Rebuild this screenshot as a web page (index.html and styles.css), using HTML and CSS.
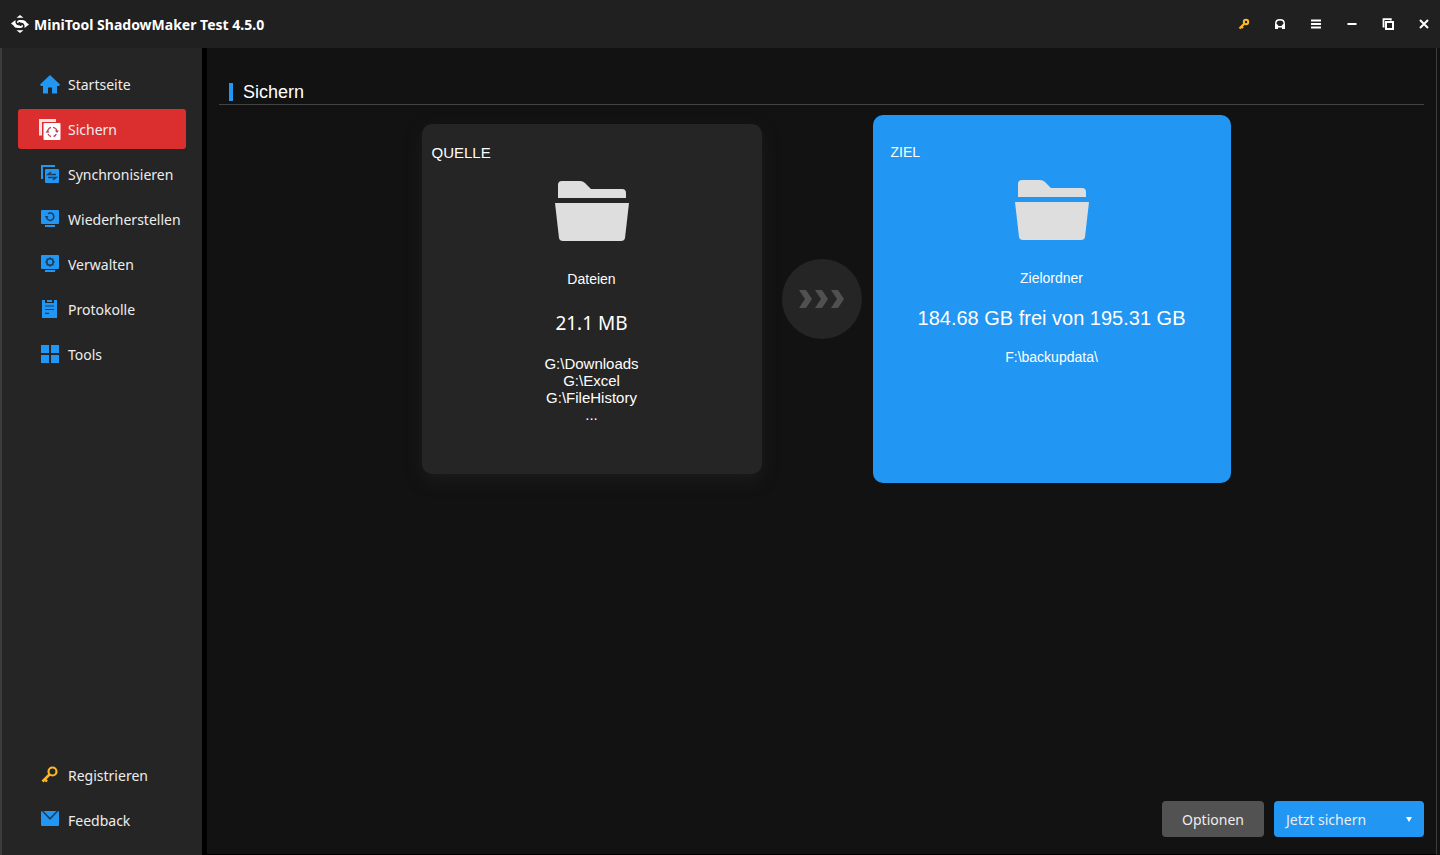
FILE: index.html
```html
<!DOCTYPE html>
<html lang="de">
<head>
<meta charset="utf-8">
<meta name="viewport" content="width=device-width, initial-scale=1">
<title>MiniTool ShadowMaker Test 4.5.0</title>
<link rel="stylesheet" href="styles.css">
</head>
<body>
<svg class="defs" aria-hidden="true">
  <symbol id="folder" viewBox="0 0 74 60">
    <path d="M3 17V4Q3 0 7 0H25Q28 0 30 2L36 8H67Q71 8 71 12V17Z"/>
    <path d="M0 22H74L70 57Q69.500 60 66 60H8Q4.500 60 4 57Z"/>
  </symbol>
</svg>
<div class="app">
  <header class="titlebar">
    <svg class="logo" viewBox="0 0 20 20" aria-hidden="true">
      <path fill="#fff" d="M6.500 3.800L10 1L13.500 3.800ZM6.500 16.200L10 19L13.500 16.200Z"/>
      <path fill="#fff" d="M1 9.500L5.500 6V8.500Q6 11.500 10 11.500V14H8Q4.500 14 3.500 11.500ZM19 10.500L14.500 14V11.500Q14 8.500 10 8.500V6H12Q15.500 6 16.500 8.500Z"/>
      <path fill="none" stroke="#fff" stroke-width="1.800" d="M11.500 7H9Q7.500 7.500 8.200 8.800M8.500 13H11Q12.500 12.500 11.800 11.200"/>
    </svg>
    <h1 class="app-name">MiniTool ShadowMaker Test 4.5.0</h1>
    <div class="window-actions">
      <button class="action" aria-label="Registrieren"><svg viewBox="0 0 12 12"><g fill="none" stroke="#fdb827"><circle cx="8" cy="4" r="2.200" stroke-width="2"/><path stroke-width="2.200" d="M6.500 5.500L1.500 10.500M3.500 8.500L5 10"/></g></svg></button>
      <button class="action" aria-label="Support"><svg viewBox="0 0 12 12"><path fill="none" stroke="#fff" stroke-width="1.500" d="M1.800 8V5.500Q1.800 1.800 6 1.800T10.200 5.500V8"/><path fill="#fff" d="M1 6.500L3 6L4.500 8L7.500 8L9 6L11 6.500V11H8V9.500H4V11H1Z"/></svg></button>
      <button class="action" aria-label="Menü"><svg viewBox="0 0 12 12"><path stroke="#fff" stroke-width="2" d="M1 2.500H11M1 6H11M1 9.500H11"/></svg></button>
      <button class="action" aria-label="Minimieren"><svg viewBox="0 0 12 12"><path stroke="#fff" stroke-width="2" d="M1.500 6H10.500"/></svg></button>
      <button class="action" aria-label="Wiederherstellen"><svg viewBox="0 0 12 12"><path fill="none" stroke="#fff" stroke-width="1.800" d="M2.500 8.500H1.500V1.200H8.800V2.500"/><rect x="4" y="4" width="7" height="7" fill="none" stroke="#fff" stroke-width="2"/></svg></button>
      <button class="action" aria-label="Schließen"><svg viewBox="0 0 12 12"><path stroke="#fff" stroke-width="2" d="M2 2L10 10M10 2L2 10"/></svg></button>
    </div>
  </header>
  <nav class="sidebar">
    <a class="nav-item" href="#start"><svg viewBox="0 0 20 20"><path fill="#2196f3" d="M10 0L20 9.500L19 11H17V18.500H12V12.500H8V18.500H3V11H1L0 9.500Z"/></svg>Startseite</a>
    <a class="nav-item is-active" href="#sichern" aria-current="page"><svg viewBox="0 0 20 20"><path fill="#f6dfe8" d="M-1 -1H16V2H2V15.500H-1Z"/><rect x="3.500" y="3" width="17" height="17" rx="1" fill="#fff"/><g fill="none" stroke="#c4405a" stroke-width="1.300"><path d="M7.500 12.500Q7.500 8.500 11 7.300M13 7.300Q17 8 17 12M16.200 14Q15.500 16 13.500 16.500M11 16.500Q9 16 8 14"/></g><path fill="#c4405a" d="M14.800 10.500H19L17 13ZM5.500 12.500H9.700L7.500 10Z"/></svg>Sichern</a>
    <a class="nav-item" href="#sync"><svg viewBox="0 0 20 20"><path fill="#2196f3" d="M1 0H15V2H3V14H1Z"/><rect x="5" y="4" width="14" height="14" rx="1" fill="#2196f3"/><path fill="none" stroke="#203c56" stroke-width="1.500" d="M16 9.500H8L11 7M8 12.500H16L13 15"/></svg>Synchronisieren</a>
    <a class="nav-item" href="#restore"><svg viewBox="0 0 20 20"><rect x="1" width="18" height="14" rx="1" fill="#2196f3"/><path fill="#2196f3" d="M5 15H15V17H5Z"/><path fill="none" stroke="#203c56" stroke-width="1.500" d="M6.500 7A3.700 3.700 0 1 0 8 3.700"/><path fill="#203c56" d="M4.800 6H8.500L6.500 8.500Z"/></svg>Wiederherstellen</a>
    <a class="nav-item" href="#manage"><svg viewBox="0 0 20 20"><rect x="1" width="18" height="14" rx="1" fill="#2196f3"/><path fill="#2196f3" d="M5 15H15V17H5Z"/><circle cx="10" cy="7" r="3.200" fill="none" stroke="#203c56" stroke-width="1.500"/><path stroke="#203c56" stroke-width="1.500" d="M10 2.300V4M10 10V11.700M5.300 7H7M13 7H14.700M6.700 3.700L8 5M12 9L13.300 10.300M13.300 3.700L12 5M8 9L6.700 10.300"/></svg>Verwalten</a>
    <a class="nav-item" href="#logs"><svg viewBox="0 0 20 20"><path fill="#2196f3" d="M2 0H5V3H14V0H17V18H2ZM7 0H12V2H7Z"/><path stroke="#203c56" stroke-width="1.200" d="M5 6H14M5 9.500H14M5 13.300H9"/></svg>Protokolle</a>
    <a class="nav-item" href="#tools"><svg viewBox="0 0 20 20"><path fill="#2196f3" d="M1 0H9V8H1ZM11 0H19V8H11ZM1 10H9V18H1ZM11 10H19V18H11Z"/></svg>Tools</a>
    <div class="nav-spacer"></div>
    <a class="nav-item" href="#register"><svg viewBox="0 0 20 20"><g fill="none" stroke="#fdb827"><circle cx="12.500" cy="5.500" r="4" stroke-width="2.200"/><path stroke-width="2.500" d="M9.500 8.500L2.500 15.500M4.500 13L7 15.500"/></g></svg>Registrieren</a>
    <a class="nav-item" href="#feedback"><svg viewBox="0 0 20 20"><rect x="1" y="0" width="18" height="15" rx="1" fill="#2196f3"/><path fill="none" stroke="#203c56" stroke-width="1.600" d="M2.500 0L10 7.800L17.500 0"/></svg>Feedback</a>
  </nav>
  <main class="content">
    <h2 class="page-title">Sichern</h2>
    <section class="flow">
      <button class="card card-source">
        <span class="card-label">QUELLE</span>
        <svg class="folder"><use href="#folder"/></svg>
        <span class="kind">Dateien</span>
        <span class="size">21.1 MB</span>
        <span class="paths">G:\Downloads<br>G:\Excel<br>G:\FileHistory<br>...</span>
      </button>
      <div class="arrow"><svg viewBox="0 0 46 18" aria-hidden="true"><path d="M0 0H7L13 9L7 18H0L6 9ZM16 0H23L29 9L23 18H16L22 9ZM32 0H39L45 9L39 18H32L38 9Z"/></svg></div>
      <button class="card card-target">
        <span class="card-label">ZIEL</span>
        <svg class="folder"><use href="#folder"/></svg>
        <span class="kind">Zielordner</span>
        <span class="size">184.68 GB frei von 195.31 GB</span>
        <span class="paths">F:\backupdata\</span>
      </button>
    </section>
    <footer class="actions">
      <button class="btn btn-options">Optionen</button>
      <button class="btn btn-primary">Jetzt sichern<svg viewBox="0 0 6 5" aria-hidden="true"><path d="M0 0H6L3 5Z"/></svg></button>
    </footer>
  </main>
</div>
</body>
</html>
```

FILE: styles.css
```css
* {
  box-sizing: border-box;
}

body {
  margin: 0;
  background: #121212;
  color: #fff;
  font-family: "Noto Sans", sans-serif;
  font-size: 14px;
}

button {
  border: 0;
  padding: 0;
  color: inherit;
  font: inherit;
  background: none;
  cursor: pointer;
}

.defs {
  position: absolute;
  width: 0;
  height: 0;
}

.app {
  display: grid;
  grid-template: 48px 1fr / 207px 1fr;
  min-height: 100vh;
}

.titlebar {
  grid-column: 1 / -1;
  display: flex;
  align-items: center;
  padding: 0 4px 0 10px;
  background: #202020;
}

.logo {
  width: 20px;
  height: 20px;
  margin-right: 4px;
}

.app-name {
  margin: 0;
  padding-top: 2px;
  font-size: 14px;
  font-weight: 700;
  line-height: 20px;
}

.window-actions {
  display: flex;
  gap: 12px;
  margin-left: auto;
}

.action {
  display: grid;
  place-items: center;
  width: 24px;
  height: 24px;
}

.action svg {
  width: 12px;
  height: 12px;
}

.sidebar {
  display: flex;
  flex-direction: column;
  gap: 5px;
  padding: 16px 16px 15px;
  border-left: 2px solid #3c3c3c;
  border-right: 5px solid #000;
  background: #252525;
}

.nav-item {
  display: flex;
  align-items: center;
  gap: 8px;
  height: 40px;
  padding-top: 1px;
  padding-left: 22px;
  border-radius: 3px;
  color: #ededed;
  line-height: 20px;
  text-decoration: none;
  white-space: nowrap;
}

.nav-item svg {
  flex: none;
  width: 20px;
  height: 20px;
  overflow: visible;
}

.nav-item.is-active {
  background: #db2e2e;
}

.nav-spacer {
  flex: 1;
  margin-bottom: -5px;
}

.content {
  display: flex;
  flex-direction: column;
  margin-right: 3px;
  padding: 32px 12px 17px;
  border-right: 1px solid #3c3c3c;
  border-bottom: 1px solid #000;
  font-family: "Liberation Sans", Arial, sans-serif;
}

.page-title {
  display: flex;
  align-items: center;
  gap: 10px;
  height: 25px;
  margin: 0 0 19px;
  padding-left: 10px;
  border-bottom: 1px solid #434343;
  font-size: 18px;
  font-weight: 400;
}

.page-title::before {
  content: "";
  width: 4px;
  height: 18px;
  background: #2196f3;
}

.flow {
  display: flex;
  justify-content: center;
  align-items: center;
  gap: 20px;
}

.card {
  display: flex;
  flex-direction: column;
  align-items: center;
  width: 340px;
  min-height: 350px;
  padding: 20px 10px;
  border-radius: 10px;
  font-size: 14px;
  line-height: 17px;
}

.card-source {
  background: #252525;
  box-shadow: 0 6px 16px #1c1c1c;
}

.card-target {
  width: 358px;
  min-height: 368px;
  margin: -9px;
  padding: 29px 18px;
  background: #2196f3;
}

.card-label {
  align-self: flex-start;
  margin-bottom: 20px;
}

.card-target .card-label {
  margin-bottom: 19px;
}

.card-source .card-label,
.card-source .paths {
  font-size: 15px;
}

.folder {
  width: 74px;
  height: 60px;
  margin-bottom: 30px;
  fill: #dedede;
}

.kind {
  margin-bottom: 19px;
}

.size {
  margin-bottom: 19px;
  font-size: 20px;
  line-height: 24px;
}

.card-source .size {
  margin-top: 4px;
  margin-bottom: 20px;
  font-family: "Noto Sans", sans-serif;
  font-size: 19px;
}

.arrow {
  display: grid;
  place-items: center;
  width: 80px;
  height: 80px;
  border-radius: 50%;
  background: #252525;
}

.arrow svg {
  width: 46px;
  height: 18px;
  fill: #505050;
}

.actions {
  display: flex;
  justify-content: flex-end;
  gap: 10px;
  margin-top: auto;
  font-family: "Noto Sans", sans-serif;
}

.btn {
  height: 36px;
  padding-top: 2px;
  border-radius: 4px;
  color: #ededed;
  line-height: 20px;
}

.btn-options {
  width: 102px;
  background: #525252;
}

.btn-primary {
  display: flex;
  justify-content: space-between;
  align-items: center;
  width: 150px;
  padding: 1px 12px 0;
  background: #2196f3;
}

.btn-primary svg {
  width: 6px;
  height: 5px;
  fill: #fff;
}
```
